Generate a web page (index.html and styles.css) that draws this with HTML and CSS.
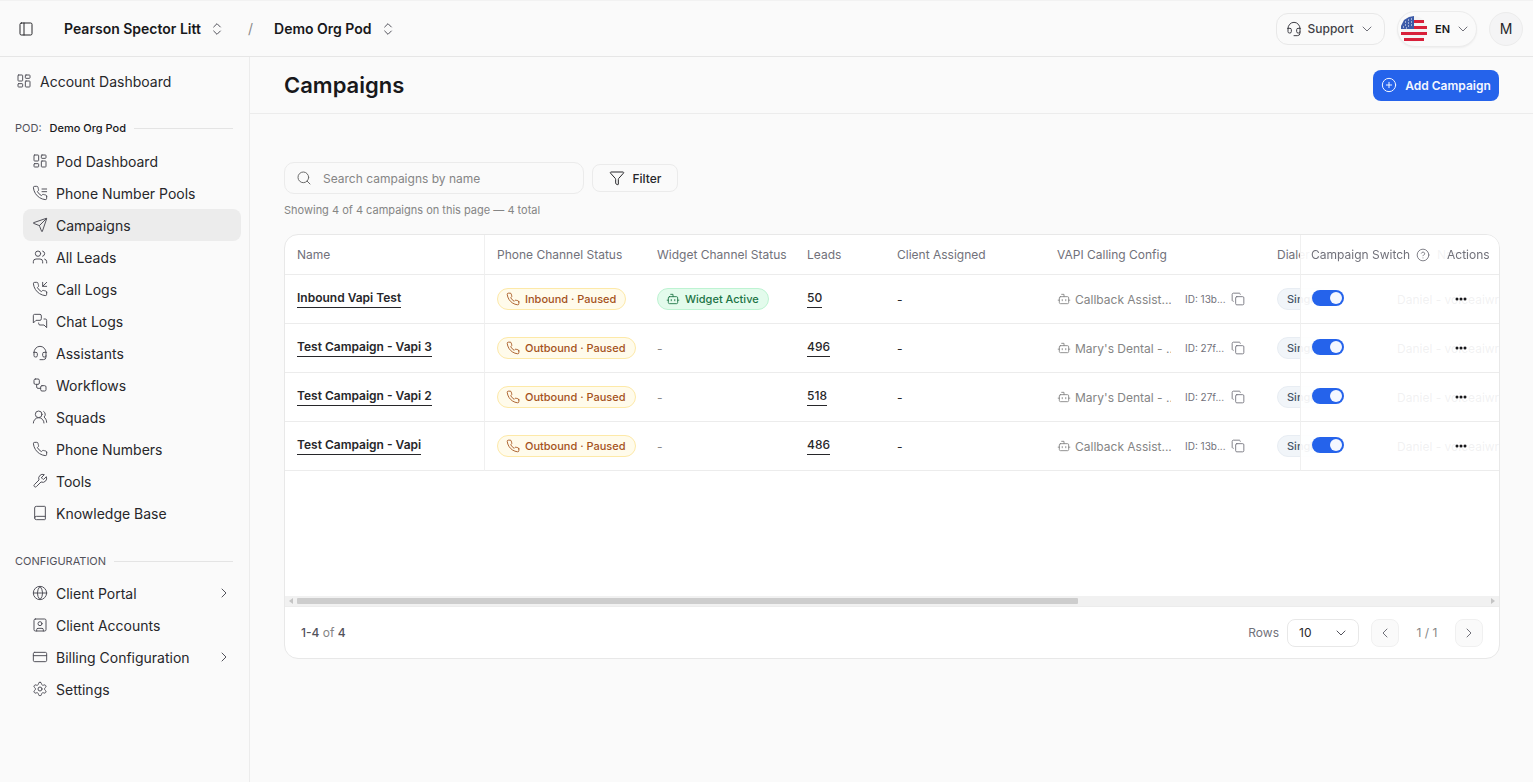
FILE: index.html
```html
<!DOCTYPE html>
<html lang="en">
<head>
    <meta charset="UTF-8">
    <meta name="viewport" content="width=device-width, initial-scale=1.0">
    <title>Campaigns</title>
    <link rel="stylesheet" href="styles.css">
</head>
<body>
    <!-- icon sprite -->
    <svg class="sprite" xmlns="http://www.w3.org/2000/svg">
        <symbol id="i-panel" viewBox="0 0 24 24"><rect x="3" y="3" width="18" height="18" rx="2"/><path d="M9 3v18"/></symbol>
        <symbol id="i-updown" viewBox="0 0 24 24"><path d="m7 15 5 5 5-5"/><path d="m7 9 5-5 5 5"/></symbol>
        <symbol id="i-headset" viewBox="0 0 24 24"><path d="M3 11h3a2 2 0 0 1 2 2v3a2 2 0 0 1-2 2H5a2 2 0 0 1-2-2v-5Zm0 0a9 9 0 1 1 18 0m0 0v5a2 2 0 0 1-2 2h-1a2 2 0 0 1-2-2v-3a2 2 0 0 1 2-2h3Z"/><path d="M21 16v2a4 4 0 0 1-4 4h-5"/></symbol>
        <symbol id="i-down" viewBox="0 0 24 24"><path d="m6 9 6 6 6-6"/></symbol>
        <symbol id="i-right" viewBox="0 0 24 24"><path d="m9 18 6-6-6-6"/></symbol>
        <symbol id="i-left" viewBox="0 0 24 24"><path d="m15 18-6-6 6-6"/></symbol>
        <symbol id="i-plus" viewBox="0 0 24 24"><circle cx="12" cy="12" r="10"/><path d="M8 12h8"/><path d="M12 8v8"/></symbol>
        <symbol id="i-search" viewBox="0 0 24 24"><circle cx="11" cy="11" r="8"/><path d="m21 21-4.3-4.3"/></symbol>
        <symbol id="i-filter" viewBox="0 0 24 24"><path d="M10 20a1 1 0 0 0 .553.895l2 1A1 1 0 0 0 14 21v-7a2 2 0 0 1 .517-1.341L21.74 4.67A1 1 0 0 0 21 3H3a1 1 0 0 0-.742 1.67l7.225 7.989A2 2 0 0 1 10 14z"/></symbol>
        <symbol id="i-dash" viewBox="0 0 24 24"><rect x="3" y="3" width="7" height="9" rx="1"/><rect x="14" y="3" width="7" height="5" rx="1"/><rect x="14" y="12" width="7" height="9" rx="1"/><rect x="3" y="16" width="7" height="5" rx="1"/></symbol>
        <symbol id="i-phone" viewBox="0 0 24 24"><path d="M22 16.92v3a2 2 0 0 1-2.18 2 19.79 19.79 0 0 1-8.63-3.07 19.5 19.5 0 0 1-6-6 19.79 19.79 0 0 1-3.07-8.67A2 2 0 0 1 4.11 2h3a2 2 0 0 1 2 1.72 12.84 12.84 0 0 0 .7 2.81 2 2 0 0 1-.45 2.11L8.09 9.91a16 16 0 0 0 6 6l1.27-1.27a2 2 0 0 1 2.11-.45 12.84 12.84 0 0 0 2.81.7A2 2 0 0 1 22 16.92z"/></symbol>
        <symbol id="i-pools" viewBox="0 0 24 24"><path d="M22 16.92v3a2 2 0 0 1-2.18 2 19.79 19.79 0 0 1-8.63-3.07 19.5 19.5 0 0 1-6-6 19.79 19.79 0 0 1-3.07-8.67A2 2 0 0 1 4.11 2h3a2 2 0 0 1 2 1.72 12.84 12.84 0 0 0 .7 2.81 2 2 0 0 1-.45 2.11L8.09 9.91a16 16 0 0 0 6 6l1.27-1.27a2 2 0 0 1 2.11-.45 12.84 12.84 0 0 0 2.81.7A2 2 0 0 1 22 16.92z"/><path d="M15 6h7"/><path d="M15 10h7"/></symbol>
        <symbol id="i-send" viewBox="0 0 24 24"><path d="M14.536 21.686a.5.5 0 0 0 .937-.024l6.5-19a.496.496 0 0 0-.635-.635l-19 6.5a.5.5 0 0 0-.024.937l7.93 3.18a2 2 0 0 1 1.112 1.11z"/><path d="m21.854 2.147-10.94 10.939"/></symbol>
        <symbol id="i-users" viewBox="0 0 24 24"><path d="M16 21v-2a4 4 0 0 0-4-4H6a4 4 0 0 0-4 4v2"/><circle cx="9" cy="7" r="4"/><path d="M22 21v-2a4 4 0 0 0-3-3.87"/><path d="M16 3.13a4 4 0 0 1 0 7.75"/></symbol>
        <symbol id="i-calls" viewBox="0 0 24 24"><path d="M22 16.92v3a2 2 0 0 1-2.18 2 19.79 19.79 0 0 1-8.63-3.07 19.5 19.5 0 0 1-6-6 19.79 19.79 0 0 1-3.07-8.67A2 2 0 0 1 4.11 2h3a2 2 0 0 1 2 1.72 12.84 12.84 0 0 0 .7 2.81 2 2 0 0 1-.45 2.11L8.09 9.91a16 16 0 0 0 6 6l1.27-1.27a2 2 0 0 1 2.11-.45 12.84 12.84 0 0 0 2.81.7A2 2 0 0 1 22 16.92z"/><path d="M16 2v6h6"/><path d="m22 2-6 6"/></symbol>
        <symbol id="i-chat" viewBox="0 0 24 24"><path d="M14 9a2 2 0 0 1-2 2H6l-4 4V4a2 2 0 0 1 2-2h8a2 2 0 0 1 2 2z"/><path d="M18 9h2a2 2 0 0 1 2 2v11l-4-4h-6a2 2 0 0 1-2-2v-1"/></symbol>
        <symbol id="i-flow" viewBox="0 0 24 24"><rect x="3" y="3" width="8" height="8" rx="2"/><path d="M7 11v4a2 2 0 0 0 2 2h4"/><rect x="13" y="13" width="8" height="8" rx="2"/></symbol>
        <symbol id="i-squads" viewBox="0 0 24 24"><path d="M18 21a8 8 0 0 0-16 0"/><circle cx="10" cy="8" r="5"/><path d="M22 20c0-3.37-2-6.5-4-8a5 5 0 0 0-.45-8.3"/></symbol>
        <symbol id="i-wrench" viewBox="0 0 24 24"><path d="M14.7 6.3a1 1 0 0 0 0 1.4l1.6 1.6a1 1 0 0 0 1.4 0l3.77-3.77a6 6 0 0 1-7.94 7.94l-6.91 6.91a2.12 2.12 0 0 1-3-3l6.91-6.91a6 6 0 0 1 7.94-7.94l-3.76 3.76z"/></symbol>
        <symbol id="i-book" viewBox="0 0 24 24"><path d="M4 19.5v-15A2.5 2.5 0 0 1 6.5 2H19a1 1 0 0 1 1 1v18a1 1 0 0 1-1 1H6.5a1 1 0 0 1 0-5H20"/></symbol>
        <symbol id="i-globe" viewBox="0 0 24 24"><circle cx="12" cy="12" r="10"/><path d="M12 2a14.5 14.5 0 0 0 0 20 14.5 14.5 0 0 0 0-20"/><path d="M2 12h20"/></symbol>
        <symbol id="i-account" viewBox="0 0 24 24"><rect x="3" y="3" width="18" height="18" rx="2"/><circle cx="12" cy="10" r="3"/><path d="M7 21v-2a2 2 0 0 1 2-2h6a2 2 0 0 1 2 2v2"/></symbol>
        <symbol id="i-card" viewBox="0 0 24 24"><rect x="2" y="5" width="20" height="14" rx="2"/><path d="M2 10h20"/></symbol>
        <symbol id="i-gear" viewBox="0 0 24 24"><path d="M12.22 2h-.44a2 2 0 0 0-2 2v.18a2 2 0 0 1-1 1.73l-.43.25a2 2 0 0 1-2 0l-.15-.08a2 2 0 0 0-2.73.73l-.22.38a2 2 0 0 0 .73 2.73l.15.1a2 2 0 0 1 1 1.72v.51a2 2 0 0 1-1 1.74l-.15.09a2 2 0 0 0-.73 2.73l.22.38a2 2 0 0 0 2.73.73l.15-.08a2 2 0 0 1 2 0l.43.25a2 2 0 0 1 1 1.73V20a2 2 0 0 0 2 2h.44a2 2 0 0 0 2-2v-.18a2 2 0 0 1 1-1.73l.43-.25a2 2 0 0 1 2 0l.15.08a2 2 0 0 0 2.73-.73l.22-.39a2 2 0 0 0-.73-2.73l-.15-.08a2 2 0 0 1-1-1.74v-.5a2 2 0 0 1 1-1.74l.15-.09a2 2 0 0 0 .73-2.73l-.22-.38a2 2 0 0 0-2.73-.73l-.15.08a2 2 0 0 1-2 0l-.43-.25a2 2 0 0 1-1-1.73V4a2 2 0 0 0-2-2z"/><circle cx="12" cy="12" r="3"/></symbol>
        <symbol id="i-bot" viewBox="0 0 24 24"><path d="M12 8V4H8"/><rect x="4" y="8" width="16" height="12" rx="2"/><path d="M2 14h2"/><path d="M20 14h2"/><path d="M15 13v2"/><path d="M9 13v2"/></symbol>
        <symbol id="i-copy" viewBox="0 0 24 24"><rect x="8" y="8" width="14" height="14" rx="2"/><path d="M4 16c-1.1 0-2-.9-2-2V4c0-1.1.9-2 2-2h10c1.1 0 2 .9 2 2"/></symbol>
        <symbol id="i-help" viewBox="0 0 24 24"><circle cx="12" cy="12" r="10"/><path d="M9.09 9a3 3 0 0 1 5.83 1c0 2-3 3-3 3"/><path d="M12 17h.01"/></symbol>
    </svg>

    <header class="topbar">
        <svg class="icon topbar-toggle"><use href="#i-panel"/></svg>
        <div class="crumb crumb-org">Pearson Spector Litt <svg class="icon-sm"><use href="#i-updown"/></svg></div>
        <span class="crumb-sep">/</span>
        <div class="crumb">Demo Org Pod <svg class="icon-sm"><use href="#i-updown"/></svg></div>
        <div class="topbar-right">
            <button class="support-btn"><svg class="icon"><use href="#i-headset"/></svg>Support<svg class="icon-xs"><use href="#i-down"/></svg></button>
            <button class="lang-btn">
                <svg class="flag" viewBox="0 0 26 26">
                    <circle cx="13" cy="13" r="13" fill="#f4f4f4"/>
                    <path d="M3 4h20v3H3zM0 10h26v3H0zM0 16h26v3H0zM3 22h20v3H3z" fill="#d8203a"/>
                    <path d="M0 13V10L3 4 8 1 13 0V13z" fill="#3c5aa8"/>
                    <path d="M4 6h1M7 4h1M10 3h1M4 9h1M7 7h1M10 6h1M7 10h1M10 9h1M2 11h1M5 12h1" stroke="#fff" stroke-width="1"/>
                </svg>
                <span class="lang-code">EN</span>
                <svg class="icon-xs"><use href="#i-down"/></svg>
            </button>
            <div class="avatar">M</div>
        </div>
    </header>

    <div class="layout">
        <aside class="sidebar">
            <a class="nav-top"><svg class="icon"><use href="#i-dash"/></svg>Account Dashboard</a>

            <div class="nav-head nav-head-pod"><span>POD:</span><b>Demo Org Pod</b><i></i></div>
            <nav class="nav-list">
                <a class="nav-item"><svg class="icon"><use href="#i-dash"/></svg>Pod Dashboard</a>
                <a class="nav-item"><svg class="icon"><use href="#i-pools"/></svg>Phone Number Pools</a>
                <a class="nav-item active"><svg class="icon"><use href="#i-send"/></svg>Campaigns</a>
                <a class="nav-item"><svg class="icon"><use href="#i-users"/></svg>All Leads</a>
                <a class="nav-item"><svg class="icon"><use href="#i-calls"/></svg>Call Logs</a>
                <a class="nav-item"><svg class="icon"><use href="#i-chat"/></svg>Chat Logs</a>
                <a class="nav-item"><svg class="icon"><use href="#i-headset"/></svg>Assistants</a>
                <a class="nav-item"><svg class="icon"><use href="#i-flow"/></svg>Workflows</a>
                <a class="nav-item"><svg class="icon"><use href="#i-squads"/></svg>Squads</a>
                <a class="nav-item"><svg class="icon"><use href="#i-phone"/></svg>Phone Numbers</a>
                <a class="nav-item"><svg class="icon"><use href="#i-wrench"/></svg>Tools</a>
                <a class="nav-item"><svg class="icon"><use href="#i-book"/></svg>Knowledge Base</a>
            </nav>

            <div class="nav-head nav-head-config"><span>CONFIGURATION</span><i></i></div>
            <nav class="nav-list">
                <a class="nav-item"><svg class="icon"><use href="#i-globe"/></svg>Client Portal<svg class="icon nav-caret"><use href="#i-right"/></svg></a>
                <a class="nav-item"><svg class="icon"><use href="#i-account"/></svg>Client Accounts</a>
                <a class="nav-item"><svg class="icon"><use href="#i-card"/></svg>Billing Configuration<svg class="icon nav-caret"><use href="#i-right"/></svg></a>
                <a class="nav-item"><svg class="icon"><use href="#i-gear"/></svg>Settings</a>
            </nav>
        </aside>

        <main class="main">
            <div class="page-head">
                <h1>Campaigns</h1>
                <button class="add-btn"><svg class="icon"><use href="#i-plus"/></svg>Add Campaign</button>
            </div>

            <div class="content">
                <div class="toolbar">
                    <div class="search"><svg class="icon"><use href="#i-search"/></svg><span>Search campaigns by name</span></div>
                    <button class="filter-btn"><svg class="icon"><use href="#i-filter"/></svg>Filter</button>
                </div>
                <p class="hint">Showing 4 of 4 campaigns on this page — 4 total</p>

                <div class="card">
                    <div class="table-wrap">
                        <table class="table">
                            <colgroup>
                                <col class="c-name"><col class="c-phone"><col class="c-widget"><col class="c-leads">
                                <col class="c-client"><col class="c-vapi"><col class="c-dialer"><col class="c-agent"><col class="c-fixed">
                            </colgroup>
                            <thead>
                                <tr>
                                    <th class="name-cell">Name</th>
                                    <th>Phone Channel Status</th>
                                    <th>Widget Channel Status</th>
                                    <th>Leads</th>
                                    <th>Client Assigned</th>
                                    <th>VAPI Calling Config</th>
                                    <th>Dialer Mode</th>
                                    <th class="agent-head">Name</th>
                                    <th class="fixed-cell">
                                        <div class="fixed-row">
                                            <span class="switch-head">Campaign Switch <svg class="icon-sm"><use href="#i-help"/></svg></span>
                                            <span>Actions</span>
                                        </div>
                                    </th>
                                </tr>
                            </thead>
                            <tbody>
                                <tr>
                                    <td class="name-cell"><a class="name-link">Inbound Vapi Test</a></td>
                                    <td><span class="badge badge-amber"><svg class="icon-sm"><use href="#i-phone"/></svg>Inbound · Paused</span></td>
                                    <td><span class="badge badge-green"><svg class="icon-sm"><use href="#i-bot"/></svg>Widget Active</span></td>
                                    <td><a class="leads-link">50</a></td>
                                    <td class="dash-strong">-</td>
                                    <td><div class="config"><svg class="icon-sm"><use href="#i-bot"/></svg><span class="config-name">Callback Assist...</span><span class="config-id">ID: 13b...</span><svg class="icon-copy"><use href="#i-copy"/></svg></div></td>
                                    <td><span class="dialer">Single</span></td>
                                    <td class="agent">Daniel - voiceaiwrapper</td>
                                    <td class="fixed-cell"><div class="fixed-row"><span class="toggle"></span><svg class="dots" viewBox="0 0 12 4"><circle cx="2" cy="2" r="1.5"/><circle cx="6" cy="2" r="1.5"/><circle cx="10" cy="2" r="1.5"/></svg></div></td>
                                </tr>
                                <tr>
                                    <td class="name-cell"><a class="name-link">Test Campaign - Vapi 3</a></td>
                                    <td><span class="badge badge-amber"><svg class="icon-sm"><use href="#i-phone"/></svg>Outbound · Paused</span></td>
                                    <td class="dash">-</td>
                                    <td><a class="leads-link">496</a></td>
                                    <td class="dash-strong">-</td>
                                    <td><div class="config"><svg class="icon-sm"><use href="#i-bot"/></svg><span class="config-name">Mary's Dental - ...</span><span class="config-id">ID: 27f...</span><svg class="icon-copy"><use href="#i-copy"/></svg></div></td>
                                    <td><span class="dialer">Single</span></td>
                                    <td class="agent">Daniel - voiceaiwrapper</td>
                                    <td class="fixed-cell"><div class="fixed-row"><span class="toggle"></span><svg class="dots" viewBox="0 0 12 4"><circle cx="2" cy="2" r="1.5"/><circle cx="6" cy="2" r="1.5"/><circle cx="10" cy="2" r="1.5"/></svg></div></td>
                                </tr>
                                <tr>
                                    <td class="name-cell"><a class="name-link">Test Campaign - Vapi 2</a></td>
                                    <td><span class="badge badge-amber"><svg class="icon-sm"><use href="#i-phone"/></svg>Outbound · Paused</span></td>
                                    <td class="dash">-</td>
                                    <td><a class="leads-link">518</a></td>
                                    <td class="dash-strong">-</td>
                                    <td><div class="config"><svg class="icon-sm"><use href="#i-bot"/></svg><span class="config-name">Mary's Dental - ...</span><span class="config-id">ID: 27f...</span><svg class="icon-copy"><use href="#i-copy"/></svg></div></td>
                                    <td><span class="dialer">Single</span></td>
                                    <td class="agent">Daniel - voiceaiwrapper</td>
                                    <td class="fixed-cell"><div class="fixed-row"><span class="toggle"></span><svg class="dots" viewBox="0 0 12 4"><circle cx="2" cy="2" r="1.5"/><circle cx="6" cy="2" r="1.5"/><circle cx="10" cy="2" r="1.5"/></svg></div></td>
                                </tr>
                                <tr>
                                    <td class="name-cell"><a class="name-link">Test Campaign - Vapi</a></td>
                                    <td><span class="badge badge-amber"><svg class="icon-sm"><use href="#i-phone"/></svg>Outbound · Paused</span></td>
                                    <td class="dash">-</td>
                                    <td><a class="leads-link">486</a></td>
                                    <td class="dash-strong">-</td>
                                    <td><div class="config"><svg class="icon-sm"><use href="#i-bot"/></svg><span class="config-name">Callback Assist...</span><span class="config-id">ID: 13b...</span><svg class="icon-copy"><use href="#i-copy"/></svg></div></td>
                                    <td><span class="dialer">Single</span></td>
                                    <td class="agent">Daniel - voiceaiwrapper</td>
                                    <td class="fixed-cell"><div class="fixed-row"><span class="toggle"></span><svg class="dots" viewBox="0 0 12 4"><circle cx="2" cy="2" r="1.5"/><circle cx="6" cy="2" r="1.5"/><circle cx="10" cy="2" r="1.5"/></svg></div></td>
                                </tr>
                            </tbody>
                        </table>
                    </div>

                    <div class="scrollbar">
                        <span class="arrow arrow-left"></span>
                        <div class="scroll-track"><div class="scroll-thumb"></div></div>
                        <span class="arrow arrow-right"></span>
                    </div>

                    <div class="card-foot">
                        <div class="range"><b>1-4</b> of <b>4</b></div>
                        <div class="pager">
                            <span class="rows-label">Rows</span>
                            <div class="rows-select"><span>10</span><svg class="icon"><use href="#i-down"/></svg></div>
                            <button class="page-btn"><svg class="icon-xs"><use href="#i-left"/></svg></button>
                            <span class="page-num">1 / 1</span>
                            <button class="page-btn"><svg class="icon-xs"><use href="#i-right"/></svg></button>
                        </div>
                    </div>
                </div>
            </div>
        </main>
    </div>
</body>
</html>
```

FILE: styles.css
```css
* {
    box-sizing: border-box;
}

html, body {
    margin: 0;
    height: 100%;
}

body {
    font-family: Inter, "Noto Sans", sans-serif;
    background-color: #fafafa;
    color: #18181b;
    overflow: hidden;
}

button {
    font-family: inherit;
    cursor: pointer;
}

.sprite {
    display: none;
}

.icon, .icon-sm, .icon-xs, .icon-copy {
    fill: none;
    stroke: currentColor;
    stroke-width: 1.5;
    stroke-linecap: round;
    stroke-linejoin: round;
    flex-shrink: 0;
}

.icon {
    width: 16px;
    height: 16px;
}

.icon-sm {
    width: 14px;
    height: 14px;
}

.icon-xs {
    width: 16px;
    height: 16px;
    color: #71717a;
}

/* top bar */
.topbar {
    height: 57px;
    display: flex;
    align-items: center;
    padding: 0 10px 0 18px;
    border-top: 1px solid #f2f2f2;
    border-bottom: 1px solid #e6e6e6;
}

.topbar-toggle {
    color: #27272a;
}

.crumb {
    display: flex;
    align-items: center;
    gap: 8px;
    font-size: 14px;
    font-weight: 600;
    color: #18181b;
}

.crumb .icon-sm {
    width: 16px;
    height: 16px;
    color: #52525b;
}

.crumb-org {
    margin-left: 30px;
}

.crumb-sep {
    margin: 0 21px 0 23px;
    color: #8a8a8a;
    font-size: 14px;
}

.topbar-right {
    margin-left: auto;
    display: flex;
    align-items: center;
}

.support-btn {
    width: 109px;
    height: 32px;
    display: flex;
    align-items: center;
    justify-content: center;
    gap: 6px;
    background: #fafafa;
    border: 1px solid #e8e8e8;
    border-radius: 12px;
    font-size: 12px;
    font-weight: 500;
    color: #3f3f46;
}

.lang-btn {
    width: 80px;
    height: 36px;
    margin-left: 12px;
    padding: 0 5px 0 3px;
    display: flex;
    align-items: center;
    background: #fafafa;
    border: 1px solid #ececec;
    border-radius: 18px;
    box-shadow: 0 1px 2px rgba(0, 0, 0, 0.05);
}

.flag {
    width: 26px;
    height: 26px;
}

.lang-code {
    margin: 0 auto 0 8px;
    font-size: 11px;
    font-weight: 600;
    color: #18181b;
}

.avatar {
    width: 34px;
    height: 34px;
    margin-left: 12px;
    display: flex;
    align-items: center;
    justify-content: center;
    background: #f4f4f5;
    border: 1px solid #ececec;
    border-radius: 50%;
    font-size: 14px;
    color: #27272a;
}

/* layout */
.layout {
    display: flex;
    height: calc(100vh - 57px);
}

.sidebar {
    width: 250px;
    flex-shrink: 0;
    padding-top: 8px;
    border-right: 1px solid #ececec;
}

.nav-top {
    height: 32px;
    padding-left: 16px;
    display: flex;
    align-items: center;
    gap: 8px;
    font-size: 14px;
    color: #27272a;
}

.nav-top .icon {
    color: #52525b;
}

.nav-head {
    height: 16px;
    margin-left: 15px;
    width: 218px;
    display: flex;
    align-items: center;
    font-size: 11px;
    color: #52525b;
}

.nav-head b {
    margin-left: 8px;
    font-weight: 500;
    color: #18181b;
    white-space: nowrap;
}

.nav-head i {
    flex: 1;
    height: 1px;
    margin-left: 8px;
    background: #e4e4e4;
}

.nav-head-pod {
    margin-top: 23px;
    margin-bottom: 9px;
}

.nav-head-config {
    margin-top: 24px;
    margin-bottom: 8px;
}

.nav-list {
    display: flex;
    flex-direction: column;
}

.nav-item {
    width: 218px;
    height: 32px;
    margin-left: 23px;
    padding: 0 9px;
    display: flex;
    align-items: center;
    gap: 8px;
    border-radius: 8px;
    font-size: 14px;
    color: #27272a;
}

.nav-item .icon {
    color: #52525b;
}

.nav-item.active {
    background-color: #ececec;
}

.nav-caret {
    margin-left: auto;
}

/* main */
.main {
    flex: 1;
    min-width: 0;
}

.page-head {
    height: 57px;
    padding: 0 34px;
    display: flex;
    align-items: center;
    justify-content: space-between;
    border-bottom: 1px solid #ececec;
}

.page-head h1 {
    margin: 0;
    font-size: 22px;
    font-weight: 600;
    color: #18181b;
}

.add-btn {
    width: 126px;
    height: 31px;
    display: flex;
    align-items: center;
    justify-content: center;
    gap: 8px;
    background-color: #2563eb;
    border: none;
    border-radius: 8px;
    color: #f4f7ff;
    font-size: 12px;
    font-weight: 600;
}

.content {
    padding: 48px 33px 0 34px;
}

.toolbar {
    display: flex;
    align-items: center;
    gap: 8px;
}

.search {
    width: 300px;
    height: 32px;
    padding: 0 11px;
    display: flex;
    align-items: center;
    gap: 11px;
    background: #fafafa;
    border: 1px solid #ebebeb;
    border-radius: 10px;
    font-size: 12px;
    color: #858585;
}

.search .icon {
    color: #6b6b6b;
}

.filter-btn {
    width: 86px;
    height: 28px;
    display: flex;
    align-items: center;
    justify-content: center;
    gap: 8px;
    background: #fafafa;
    border: 1px solid #ebebeb;
    border-radius: 8px;
    font-size: 12px;
    font-weight: 500;
    color: #27272a;
}

.hint {
    margin: 8px 0 0;
    font-size: 11px;
    line-height: 16px;
    color: #858585;
}

/* table card */
.card {
    margin-top: 16px;
    height: 425px;
    background: #fff;
    border: 1px solid #e8e8e8;
    border-radius: 14px;
    overflow: hidden;
}

.table-wrap {
    height: 361px;
    overflow: hidden;
}

.table {
    width: 1499px;
    table-layout: fixed;
    border-collapse: separate;
    border-spacing: 0;
    font-size: 12px;
}

.c-name { width: 200px; }
.c-phone { width: 160px; }
.c-widget { width: 150px; }
.c-leads { width: 90px; }
.c-client { width: 160px; }
.c-vapi { width: 220px; }
.c-dialer { width: 120px; }
.c-agent { width: 200px; }
.c-fixed { width: 199px; }

.table th {
    height: 40px;
    padding: 0 12px;
    text-align: left;
    font-weight: 400;
    color: #71717a;
    white-space: nowrap;
    overflow: hidden;
    border-bottom: 1px solid #ececec;
}

.table td {
    height: 49px;
    padding: 0 12px;
    white-space: nowrap;
    overflow: hidden;
    border-bottom: 1px solid #ececec;
}

.name-cell {
    border-right: 1px solid #f0f0f0;
}

.name-link {
    display: inline-block;
    font-weight: 600;
    color: #27272a;
    border-bottom: 1px solid #27272a;
    line-height: 16px;
    padding-bottom: 1px;
}

.leads-link {
    display: inline-block;
    font-weight: 500;
    font-size: 12px;
    color: #27272a;
    border-bottom: 1px solid #27272a;
    line-height: 16px;
    padding-bottom: 1px;
}

.badge {
    display: inline-flex;
    align-items: center;
    gap: 5px;
    height: 22px;
    padding: 0 9px 0 8px;
    border: 1px solid;
    border-radius: 11px;
    font-size: 11px;
    font-weight: 500;
}

.badge-amber {
    background: #fffbeb;
    border-color: #fde9a8;
    color: #a4521c;
}

.badge-green {
    background: #e3fbec;
    border-color: #bdf3d2;
    color: #1c7345;
}

.dash {
    color: #8a8a8a;
}

.dash-strong {
    color: #27272a;
}

.config {
    display: flex;
    align-items: center;
    color: #858585;
    font-size: 12px;
}

.config-name {
    width: 96px;
    margin-left: 4px;
    overflow: hidden;
}

.config-id {
    width: 46px;
    margin-left: 14px;
    font-size: 10px;
    color: #71717a;
}

.icon-copy {
    width: 14px;
    height: 14px;
    color: #71717a;
}

.dialer {
    display: inline-flex;
    align-items: center;
    height: 22px;
    padding: 0 9px;
    background: #f1f5f9;
    border: 1px solid #e8edf3;
    border-radius: 11px;
    font-size: 11px;
    font-weight: 500;
    color: #475569;
}

.agent {
    font-size: 12px;
    color: #52525b;
}

.table .agent-head {
    padding-left: 52px;
}

/* sticky columns, see-through on purpose so the hidden cells ghost behind */
.table .fixed-cell {
    position: sticky;
    right: 0;
    padding: 0 10px;
    background: rgba(255, 255, 255, 0.92);
    border-left: 1px solid #f0f0f0;
}

.fixed-row {
    display: grid;
    grid-template-columns: 136px auto;
    align-items: center;
}

.switch-head {
    display: flex;
    align-items: center;
    gap: 6px;
}

.toggle {
    display: block;
    position: relative;
    width: 32px;
    height: 16px;
    margin: -3px 0 0 1px;
    background-color: #2563eb;
    border-radius: 8px;
}

.toggle::after {
    content: '';
    position: absolute;
    top: 2px;
    right: 2px;
    width: 12px;
    height: 12px;
    background: #f4f7ff;
    border-radius: 50%;
}

.dots {
    width: 12px;
    height: 4px;
    margin-left: 8px;
    fill: #18181b;
}

/* fake horizontal scrollbar */
.scrollbar {
    height: 10px;
    display: flex;
    align-items: center;
    background: #f1f1f1;
}

.arrow {
    width: 12px;
    display: flex;
    justify-content: center;
}

.arrow::before {
    content: '';
    border-top: 3px solid transparent;
    border-bottom: 3px solid transparent;
}

.arrow-left::before {
    border-right: 4px solid #c4c4c4;
}

.arrow-right::before {
    border-left: 4px solid #c4c4c4;
}

.scroll-track {
    flex: 1;
}

.scroll-thumb {
    width: 781px;
    height: 6px;
    background: #cdcdcd;
    border-radius: 1px;
}

.card-foot {
    height: 52px;
    padding: 0 16px;
    display: flex;
    align-items: center;
    justify-content: space-between;
    border-top: 1px solid #ececec;
    font-size: 12px;
}

.range {
    color: #858585;
}

.range b {
    font-weight: 500;
    color: #52525b;
}

.pager {
    display: flex;
    align-items: center;
}

.rows-label {
    color: #71717a;
}

.rows-select {
    width: 72px;
    height: 28px;
    margin-left: 8px;
    padding: 0 9px 0 11px;
    display: flex;
    align-items: center;
    justify-content: space-between;
    border: 1px solid #e8e8e8;
    border-radius: 8px;
    color: #27272a;
}

.rows-select .icon {
    color: #52525b;
}

.page-btn {
    width: 28px;
    height: 28px;
    padding: 0;
    display: flex;
    align-items: center;
    justify-content: center;
    background: #fafafa;
    border: 1px solid #f0f0f0;
    border-radius: 8px;
}

.pager .page-btn:first-of-type {
    margin-left: 12px;
}

.page-num {
    width: 56px;
    text-align: center;
    color: #858585;
}
```
